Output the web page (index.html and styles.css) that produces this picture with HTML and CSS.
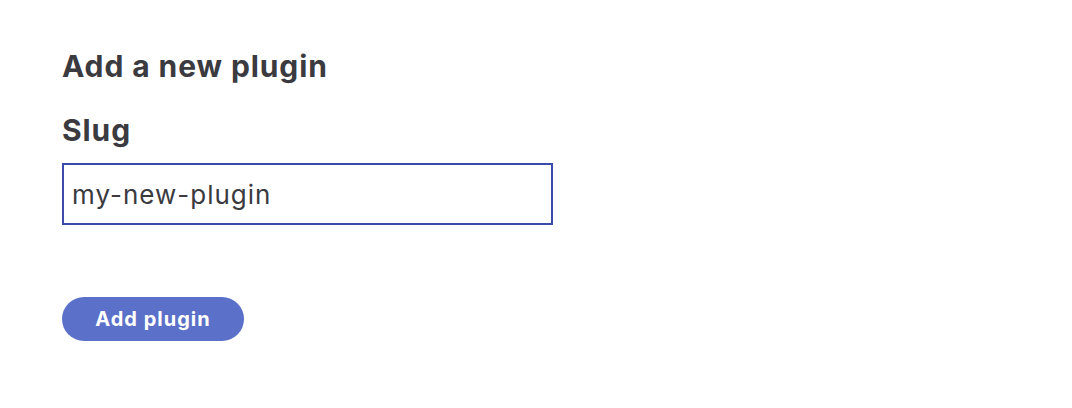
FILE: index.html
```html
<!DOCTYPE html>
<html>
<head>
<meta charset="utf-8">
<link rel="stylesheet" href="styles.css">
</head>
<body>
<main class="page">
  <h2 class="title">Add a new plugin</h2>
  <form class="form">
    <label class="label" for="slug">Slug</label>
    <input class="input" id="slug" type="text" value="my-new-plugin">
    <button class="btn" type="button">Add plugin</button>
  </form>
</main>
</body>
</html>
```

FILE: styles.css
```css
html, body {
  margin: 0;
  padding: 0;
  background: #ffffff;
}
body {
  font-family: Inter, "Noto Sans", sans-serif;
  color: #3a3a3f;
}
.page {
  padding: 46px 62px;
}
.title {
  margin: 0;
  font-size: 30px;
  font-weight: 700;
  line-height: 40px;
  letter-spacing: 0.9px;
}
.form {
  display: flex;
  flex-direction: column;
  align-items: flex-start;
}
.label {
  margin-top: 24px;
  font-size: 30px;
  font-weight: 700;
  line-height: 40px;
  letter-spacing: 0.9px;
}
.input {
  margin-top: 13px;
  box-sizing: border-box;
  width: 491px;
  height: 62px;
  border: 2px solid #3b4bab;
  padding: 0 8px;
  font-family: Inter, "Noto Sans", sans-serif;
  font-size: 26px;
  letter-spacing: 1px;
  color: #3a3a3f;
  outline: none;
}
.btn {
  margin-top: 72px;
  height: 44px;
  width: 182px;
  border: none;
  border-radius: 22px;
  background: #5b70c9;
  color: #ffffff;
  font-family: Inter, "Noto Sans", sans-serif;
  font-size: 20px;
  font-weight: 700;
  letter-spacing: 1px;
  padding: 0;
}
```
